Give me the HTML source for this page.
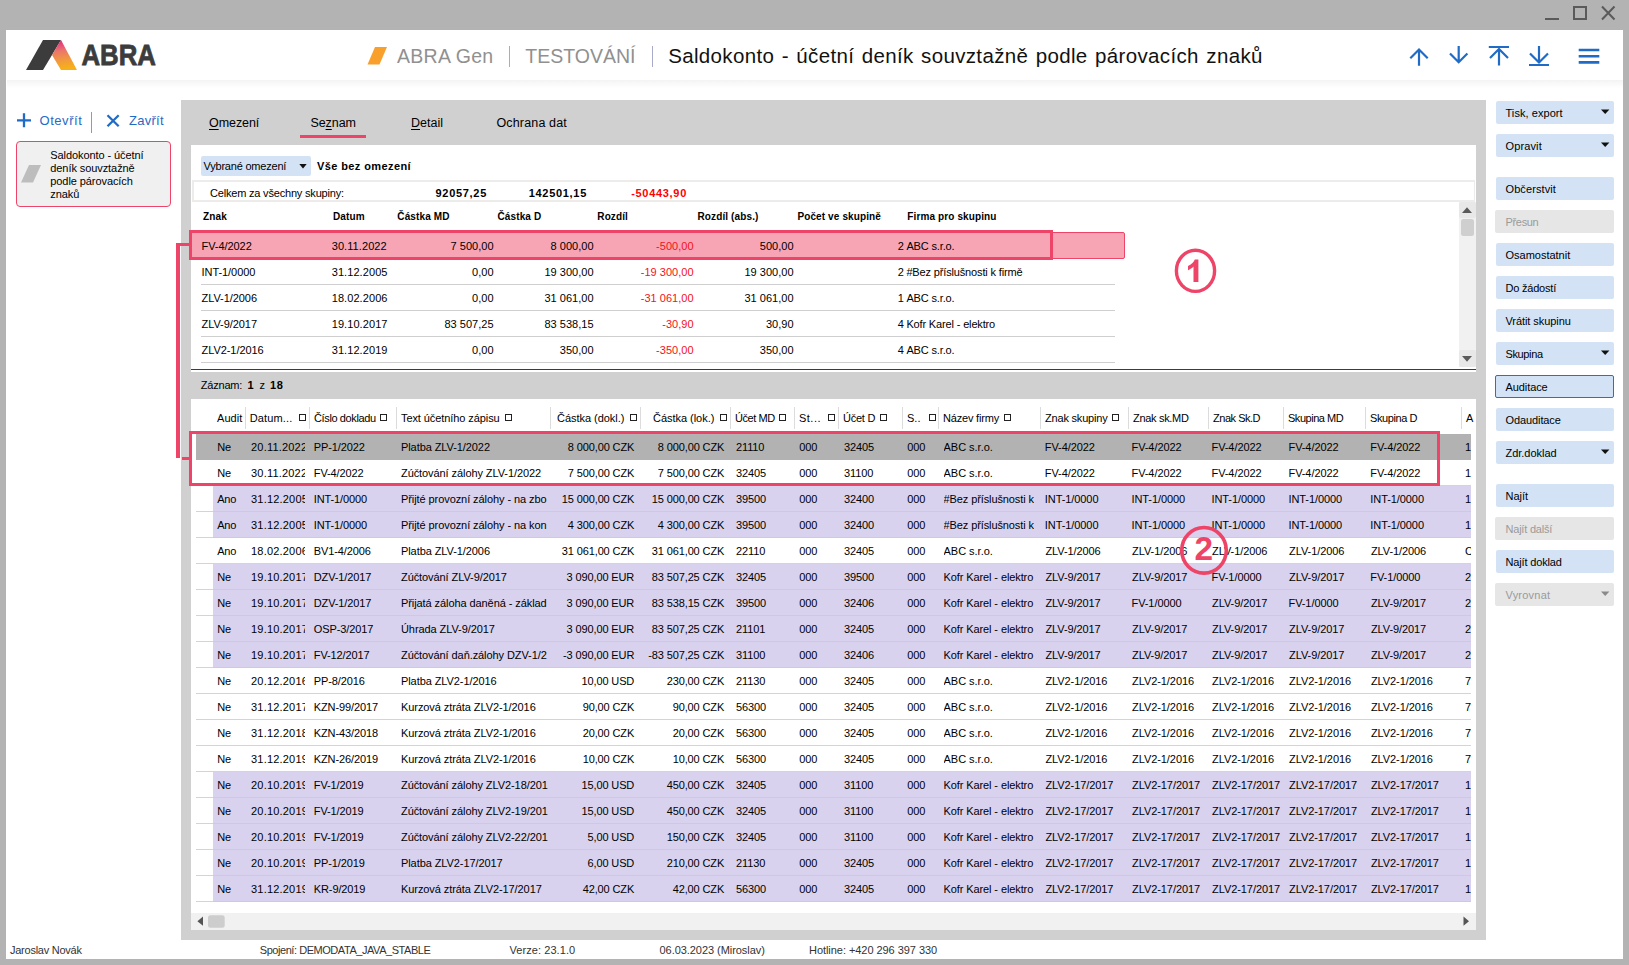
<!DOCTYPE html>
<html><head><meta charset="utf-8"><title>ABRA Gen</title>
<style>
html,body{margin:0;padding:0;}
body{width:1629px;height:965px;overflow:hidden;background:#b3b3b3;position:relative;font-family:"Liberation Sans",sans-serif;}
.r{position:absolute;}
.t{position:absolute;white-space:nowrap;color:#000;}
svg{position:absolute;overflow:visible;}
u{text-decoration-thickness:1px;text-underline-offset:2px;}
</style></head><body>

<div class="r" style="left:6px;top:30px;width:1617px;height:929px;background:#fff;"></div>
<div class="r" style="left:7px;top:80px;width:1616px;height:8px;background:linear-gradient(#f3f3f3,#f7f7f7 30%,#fff);"></div>
<svg style="left:1540px;top:0" width="89" height="30" viewBox="1540 0 89 30">
<rect x="1545" y="18" width="14" height="2" fill="#5a5a5a"/>
<rect x="1574" y="7" width="12" height="12" fill="none" stroke="#5a5a5a" stroke-width="2"/>
<path d="M1602 6.5 L1614.5 19.5 M1614.5 6.5 L1602 19.5" stroke="#5a5a5a" stroke-width="2" fill="none"/>
</svg>
<svg style="left:20px;top:36px" width="150" height="40" viewBox="20 36 150 40">
<defs><linearGradient id="lg" x1="0" y1="0" x2="0.12" y2="1"><stop offset="0" stop-color="#e6007e"/><stop offset="0.14" stop-color="#e73d7c"/><stop offset="0.4" stop-color="#ea776a"/><stop offset="0.72" stop-color="#f19a3c"/><stop offset="1" stop-color="#f7b01a"/></linearGradient></defs>
<polygon points="43,40 61,40 43,70 26,70" fill="#3c3c3c"/>
<polygon points="61,40 77,70 61,70 52,55" fill="url(#lg)"/>
<text x="81.5" y="65.3" font-family="Liberation Sans, sans-serif" font-weight="bold" font-size="29.5" fill="#3c3c3c" stroke="#3c3c3c" stroke-width="0.8" textLength="74.5" lengthAdjust="spacingAndGlyphs">ABRA</text>
</svg>
<svg style="left:366px;top:44px" width="24" height="24" viewBox="366 44 24 24"><polygon points="375,47 387,47 379.5,64.5 367.5,64.5" fill="#f9a02c"/></svg>
<div class="t " style="top:42.64px;font-size:19.5px;line-height:26px;color:#909090;letter-spacing:0.27px;left:397.00px;">ABRA Gen</div>
<div class="r" style="left:509px;top:46px;width:1px;height:21px;background:#a9a9c9;"></div>
<div class="t " style="top:42.64px;font-size:19.5px;line-height:26px;color:#909090;left:525.30px;">TESTOVÁNÍ</div>
<div class="r" style="left:652px;top:46px;width:1px;height:21px;background:#a9a9c9;"></div>
<div class="t title" style="top:41.90px;font-size:20.5px;line-height:28px;color:#111;letter-spacing:0.35px;left:668.20px;word-spacing:1.4px;">Saldokonto - účetní deník souvztažně podle párovacích znaků</div>
<svg style="left:1400px;top:40px" width="210" height="32" viewBox="1400 40 210 32" fill="none" stroke="#1f6bc6" stroke-width="2.2">
<path d="M1419 65.8 V50 M1410.3 58.2 L1419 49.5 L1427.7 58.2"/>
<path d="M1458.7 46 V61.5 M1450 53.5 L1458.7 62.2 L1467.4 53.5"/>
<path d="M1488.8 47 H1509 M1499 65.5 V49.5 M1490 58 L1499 49 L1508 58"/>
<path d="M1539 46 V62 M1530 53.5 L1539 62.5 L1548 53.5 M1529 65 H1549"/>
<path d="M1578.7 50 H1599.3 M1578.7 56.2 H1599.3 M1578.7 62.4 H1599.3" stroke-width="2.6"/>
</svg>
<svg style="left:14px;top:110px" width="110" height="22" viewBox="14 110 110 22" fill="none" stroke="#1f6bc6" stroke-width="2.3">
<path d="M24 113.3 V127.3 M17 120.3 H31"/>
<path d="M107.5 115.2 L118.7 126.2 M118.7 115.2 L107.5 126.2"/>
</svg>
<div class="t " style="top:111.50px;font-size:13px;line-height:18px;color:#1f6bc6;letter-spacing:0.55px;left:39.50px;">Otevřít</div>
<div class="r" style="left:91px;top:112px;width:1px;height:21px;background:#9494c6;"></div>
<div class="t " style="top:111.50px;font-size:13px;line-height:18px;color:#1f6bc6;letter-spacing:0.27px;left:129.00px;">Zavřít</div>
<div class="r" style="left:16px;top:141px;width:155px;height:66px;background:#f0f0f0;box-sizing:border-box;border:1px solid #ee4468;border-radius:4px;"></div>
<svg style="left:20px;top:163px" width="24" height="22" viewBox="20 163 24 22"><polygon points="29,165 41,165 33,182.6 21,182.6" fill="#bdbdbd"/></svg>
<div class="t " style="top:147.89px;font-size:11px;line-height:14px;letter-spacing:-0.08px;left:50.30px;">Saldokonto - účetní</div>
<div class="t " style="top:160.89px;font-size:11px;line-height:14px;letter-spacing:-0.08px;left:50.30px;">deník souvztažně</div>
<div class="t " style="top:173.89px;font-size:11px;line-height:14px;letter-spacing:-0.08px;left:50.30px;">podle párovacích</div>
<div class="t " style="top:186.89px;font-size:11px;line-height:14px;letter-spacing:-0.08px;left:50.30px;">znaků</div>
<div class="r" style="left:181px;top:100px;width:1305px;height:840px;background:#d0d0d0;"></div>
<div class="t " style="top:115.07px;font-size:12.5px;line-height:16px;letter-spacing:-0.07px;left:209.00px;"><u>O</u>mezení</div>
<div class="t " style="top:115.07px;font-size:12.5px;line-height:16px;letter-spacing:-0.05px;left:310.40px;">Se<u>z</u>nam</div>
<div class="t " style="top:115.07px;font-size:12.5px;line-height:16px;left:411.00px;"><u>D</u>etail</div>
<div class="t " style="top:115.07px;font-size:12.5px;line-height:16px;letter-spacing:0.15px;left:496.50px;">Ochrana dat</div>
<div class="r" style="left:300px;top:135px;width:66px;height:3px;background:#ee4468;"></div>
<div class="r" style="left:191px;top:145px;width:1285px;height:227px;background:#fff;"></div>
<div class="r" style="left:191px;top:369px;width:1285px;height:1px;background:#3c3c3c;"></div>
<div class="r" style="left:201px;top:156px;width:110px;height:20px;background:#d3e3f5;border-radius:2px;"></div>
<div class="t " style="top:158.69px;font-size:11px;line-height:14px;letter-spacing:-0.21px;left:203.50px;">Vybrané omezení</div>
<svg style="left:294px;top:160px" width="16" height="12" viewBox="294 160 16 12"><polygon points="299.3,164 306.7,164 303,168.4" fill="#111"/></svg>
<div class="t " style="top:158.69px;font-size:11px;line-height:14px;font-weight:bold;letter-spacing:0.4px;left:317.00px;">Vše bez omezení</div>
<div class="r" style="left:192px;top:180px;width:1283px;height:22px;background:#fff;box-sizing:border-box;border:1px solid #eeebeb;border-width:2px 1px 2px 2px;"></div>
<div class="t " style="top:185.69px;font-size:11px;line-height:14px;letter-spacing:-0.19px;left:210.00px;">Celkem za všechny skupiny:</div>
<div class="t " style="top:185.69px;font-size:11px;line-height:14px;font-weight:bold;letter-spacing:0.7px;right:1142.00px;text-align:right;">92057,25</div>
<div class="t " style="top:185.69px;font-size:11px;line-height:14px;font-weight:bold;letter-spacing:0.7px;right:1042.00px;text-align:right;">142501,15</div>
<div class="t " style="top:185.69px;font-size:11px;line-height:14px;color:#ff0000;font-weight:bold;letter-spacing:0.7px;right:942.00px;text-align:right;">-50443,90</div>
<div class="t " style="top:209.53px;font-size:10px;line-height:14px;font-weight:bold;letter-spacing:0.12px;left:203.00px;">Znak</div>
<div class="t " style="top:209.53px;font-size:10px;line-height:14px;font-weight:bold;letter-spacing:0.12px;left:333.00px;">Datum</div>
<div class="t " style="top:209.53px;font-size:10px;line-height:14px;font-weight:bold;letter-spacing:0.12px;left:397.30px;">Částka MD</div>
<div class="t " style="top:209.53px;font-size:10px;line-height:14px;font-weight:bold;letter-spacing:0.12px;left:497.50px;">Částka D</div>
<div class="t " style="top:209.53px;font-size:10px;line-height:14px;font-weight:bold;letter-spacing:0.12px;left:597.30px;">Rozdíl</div>
<div class="t " style="top:209.53px;font-size:10px;line-height:14px;font-weight:bold;letter-spacing:0.12px;left:697.50px;">Rozdíl (abs.)</div>
<div class="t " style="top:209.53px;font-size:10px;line-height:14px;font-weight:bold;letter-spacing:0.12px;left:797.40px;">Počet ve skupině</div>
<div class="t " style="top:209.53px;font-size:10px;line-height:14px;font-weight:bold;letter-spacing:0.12px;left:907.30px;">Firma pro skupinu</div>
<div class="r" style="left:1050px;top:232px;width:75px;height:27px;background:#f7a5b5;box-sizing:border-box;border:1px solid #ee4468;border-radius:2px;"></div>
<div class="r" style="left:189px;top:230px;width:864px;height:30px;background:#f7a5b5;box-sizing:border-box;border:3px solid #ee4468;"></div>
<div class="t " style="top:239.19px;font-size:11px;line-height:14px;letter-spacing:-0.06px;left:201.50px;">FV-4/2022</div>
<div class="t " style="top:239.19px;font-size:11px;line-height:14px;letter-spacing:0.08px;left:331.70px;">30.11.2022</div>
<div class="t " style="top:239.19px;font-size:11px;line-height:14px;letter-spacing:0.03px;right:1135.40px;text-align:right;">7 500,00</div>
<div class="t " style="top:239.19px;font-size:11px;line-height:14px;letter-spacing:0.03px;right:1035.40px;text-align:right;">8 000,00</div>
<div class="t " style="top:239.19px;font-size:11px;line-height:14px;color:#f5101a;letter-spacing:0.03px;right:935.40px;text-align:right;">-500,00</div>
<div class="t " style="top:239.19px;font-size:11px;line-height:14px;letter-spacing:0.03px;right:835.40px;text-align:right;">500,00</div>
<div class="t " style="top:239.19px;font-size:11px;line-height:14px;right:725.20px;text-align:right;">2</div>
<div class="t " style="top:239.19px;font-size:11px;line-height:14px;letter-spacing:-0.15px;left:906.40px;">ABC s.r.o.</div>
<div class="t " style="top:265.19px;font-size:11px;line-height:14px;letter-spacing:-0.06px;left:201.50px;">INT-1/0000</div>
<div class="t " style="top:265.19px;font-size:11px;line-height:14px;letter-spacing:0.08px;left:331.70px;">31.12.2005</div>
<div class="t " style="top:265.19px;font-size:11px;line-height:14px;letter-spacing:0.03px;right:1135.40px;text-align:right;">0,00</div>
<div class="t " style="top:265.19px;font-size:11px;line-height:14px;letter-spacing:0.03px;right:1035.40px;text-align:right;">19 300,00</div>
<div class="t " style="top:265.19px;font-size:11px;line-height:14px;color:#f5101a;letter-spacing:0.03px;right:935.40px;text-align:right;">-19 300,00</div>
<div class="t " style="top:265.19px;font-size:11px;line-height:14px;letter-spacing:0.03px;right:835.40px;text-align:right;">19 300,00</div>
<div class="t " style="top:265.19px;font-size:11px;line-height:14px;right:725.20px;text-align:right;">2</div>
<div class="t " style="top:265.19px;font-size:11px;line-height:14px;letter-spacing:-0.15px;left:906.40px;">#Bez příslušnosti k firmě</div>
<div class="r" style="left:201px;top:284px;width:914px;height:1px;background:#cfcfcf;"></div>
<div class="t " style="top:291.19px;font-size:11px;line-height:14px;letter-spacing:-0.06px;left:201.50px;">ZLV-1/2006</div>
<div class="t " style="top:291.19px;font-size:11px;line-height:14px;letter-spacing:0.08px;left:331.70px;">18.02.2006</div>
<div class="t " style="top:291.19px;font-size:11px;line-height:14px;letter-spacing:0.03px;right:1135.40px;text-align:right;">0,00</div>
<div class="t " style="top:291.19px;font-size:11px;line-height:14px;letter-spacing:0.03px;right:1035.40px;text-align:right;">31 061,00</div>
<div class="t " style="top:291.19px;font-size:11px;line-height:14px;color:#f5101a;letter-spacing:0.03px;right:935.40px;text-align:right;">-31 061,00</div>
<div class="t " style="top:291.19px;font-size:11px;line-height:14px;letter-spacing:0.03px;right:835.40px;text-align:right;">31 061,00</div>
<div class="t " style="top:291.19px;font-size:11px;line-height:14px;right:725.20px;text-align:right;">1</div>
<div class="t " style="top:291.19px;font-size:11px;line-height:14px;letter-spacing:-0.15px;left:906.40px;">ABC s.r.o.</div>
<div class="r" style="left:201px;top:310px;width:914px;height:1px;background:#cfcfcf;"></div>
<div class="t " style="top:317.19px;font-size:11px;line-height:14px;letter-spacing:-0.06px;left:201.50px;">ZLV-9/2017</div>
<div class="t " style="top:317.19px;font-size:11px;line-height:14px;letter-spacing:0.08px;left:331.70px;">19.10.2017</div>
<div class="t " style="top:317.19px;font-size:11px;line-height:14px;letter-spacing:0.03px;right:1135.40px;text-align:right;">83 507,25</div>
<div class="t " style="top:317.19px;font-size:11px;line-height:14px;letter-spacing:0.03px;right:1035.40px;text-align:right;">83 538,15</div>
<div class="t " style="top:317.19px;font-size:11px;line-height:14px;color:#f5101a;letter-spacing:0.03px;right:935.40px;text-align:right;">-30,90</div>
<div class="t " style="top:317.19px;font-size:11px;line-height:14px;letter-spacing:0.03px;right:835.40px;text-align:right;">30,90</div>
<div class="t " style="top:317.19px;font-size:11px;line-height:14px;right:725.20px;text-align:right;">4</div>
<div class="t " style="top:317.19px;font-size:11px;line-height:14px;letter-spacing:-0.15px;left:906.40px;">Kofr Karel - elektro</div>
<div class="r" style="left:201px;top:336px;width:914px;height:1px;background:#cfcfcf;"></div>
<div class="t " style="top:343.19px;font-size:11px;line-height:14px;letter-spacing:-0.06px;left:201.50px;">ZLV2-1/2016</div>
<div class="t " style="top:343.19px;font-size:11px;line-height:14px;letter-spacing:0.08px;left:331.70px;">31.12.2019</div>
<div class="t " style="top:343.19px;font-size:11px;line-height:14px;letter-spacing:0.03px;right:1135.40px;text-align:right;">0,00</div>
<div class="t " style="top:343.19px;font-size:11px;line-height:14px;letter-spacing:0.03px;right:1035.40px;text-align:right;">350,00</div>
<div class="t " style="top:343.19px;font-size:11px;line-height:14px;color:#f5101a;letter-spacing:0.03px;right:935.40px;text-align:right;">-350,00</div>
<div class="t " style="top:343.19px;font-size:11px;line-height:14px;letter-spacing:0.03px;right:835.40px;text-align:right;">350,00</div>
<div class="t " style="top:343.19px;font-size:11px;line-height:14px;right:725.20px;text-align:right;">4</div>
<div class="t " style="top:343.19px;font-size:11px;line-height:14px;letter-spacing:-0.15px;left:906.40px;">ABC s.r.o.</div>
<div class="r" style="left:201px;top:362px;width:914px;height:1px;background:#cfcfcf;"></div>
<div class="r" style="left:1459px;top:202px;width:17px;height:165px;background:#f1f1f1;"></div>
<div class="r" style="left:1459px;top:202px;width:17px;height:16px;background:#e8e8e8;border-radius:2px;"></div>
<div class="r" style="left:1459px;top:350px;width:17px;height:17px;background:#e8e8e8;border-radius:2px;"></div>
<svg style="left:1459px;top:202px" width="16" height="165" viewBox="1459 202 16 165"><polygon points="1462,213 1472,213 1467,207.3" fill="#5a5a5a"/><rect x="1461" y="219" width="13" height="17" rx="2.5" fill="#cfcfcf"/><polygon points="1462,356 1472,356 1467,361.7" fill="#5a5a5a"/></svg>
<svg style="left:1170px;top:245px" width="52" height="52" viewBox="1170 245 52 52"><ellipse cx="1195.5" cy="270.8" rx="19.1" ry="20.6" fill="#fff" stroke="#ee4468" stroke-width="3.4"/><path d="M1198.4 259.4 V282 H1193.5 V266.6 C1192 268.2 1190.3 269.4 1188 270.3 V265.9 C1191.2 264.6 1193.8 262.3 1194.8 259.4 Z" fill="#ee4468"/></svg>
<div class="t " style="top:378.19px;font-size:11px;line-height:14px;letter-spacing:-0.2px;left:200.80px;">Záznam:</div>
<div class="t " style="top:378.19px;font-size:11px;line-height:14px;font-weight:bold;left:247.50px;">1</div>
<div class="t " style="top:378.19px;font-size:11px;line-height:14px;left:259.50px;">z</div>
<div class="t " style="top:378.19px;font-size:11px;line-height:14px;font-weight:bold;letter-spacing:0.7px;left:270.00px;">18</div>
<div class="r" style="left:191px;top:399px;width:1285px;height:531px;background:#fff;"></div>
<div class="t " style="top:411.19px;font-size:11px;line-height:14px;letter-spacing:0.044px;left:217.00px;">Audit</div>
<div class="t " style="top:411.19px;font-size:11px;line-height:14px;letter-spacing:0.153px;left:249.70px;">Datum...</div>
<div class="r" style="left:299px;top:414px;width:6px;height:6px;box-sizing:border-box;border:1px solid #222;width:7px;height:7px;background:#fff;"></div>
<div class="t " style="top:411.19px;font-size:11px;line-height:14px;letter-spacing:-0.374px;left:314.00px;">Číslo dokladu</div>
<div class="r" style="left:380px;top:414px;width:6px;height:6px;box-sizing:border-box;border:1px solid #222;width:7px;height:7px;background:#fff;"></div>
<div class="t " style="top:411.19px;font-size:11px;line-height:14px;letter-spacing:-0.085px;left:401.00px;">Text účetního zápisu</div>
<div class="r" style="left:504.5px;top:414px;width:6px;height:6px;box-sizing:border-box;border:1px solid #222;width:7px;height:7px;background:#fff;"></div>
<div class="t " style="top:411.19px;font-size:11px;line-height:14px;letter-spacing:-0.033px;left:557.00px;">Částka (dokl.)</div>
<div class="r" style="left:630px;top:414px;width:6px;height:6px;box-sizing:border-box;border:1px solid #222;width:7px;height:7px;background:#fff;"></div>
<div class="t " style="top:411.19px;font-size:11px;line-height:14px;letter-spacing:-0.035px;left:653.00px;">Částka (lok.)</div>
<div class="r" style="left:720px;top:414px;width:6px;height:6px;box-sizing:border-box;border:1px solid #222;width:7px;height:7px;background:#fff;"></div>
<div class="t " style="top:411.19px;font-size:11px;line-height:14px;letter-spacing:-0.426px;left:735.00px;">Účet MD</div>
<div class="r" style="left:779px;top:414px;width:6px;height:6px;box-sizing:border-box;border:1px solid #222;width:7px;height:7px;background:#fff;"></div>
<div class="t " style="top:411.19px;font-size:11px;line-height:14px;letter-spacing:0.487px;left:799.00px;">St...</div>
<div class="r" style="left:828px;top:414px;width:6px;height:6px;box-sizing:border-box;border:1px solid #222;width:7px;height:7px;background:#fff;"></div>
<div class="t " style="top:411.19px;font-size:11px;line-height:14px;letter-spacing:-0.254px;left:843.00px;">Účet D</div>
<div class="r" style="left:879.5px;top:414px;width:6px;height:6px;box-sizing:border-box;border:1px solid #222;width:7px;height:7px;background:#fff;"></div>
<div class="t " style="top:411.19px;font-size:11px;line-height:14px;letter-spacing:0.016px;left:907.00px;">S..</div>
<div class="r" style="left:928.5px;top:414px;width:6px;height:6px;box-sizing:border-box;border:1px solid #222;width:7px;height:7px;background:#fff;"></div>
<div class="t " style="top:411.19px;font-size:11px;line-height:14px;letter-spacing:-0.188px;left:943.00px;">Název firmy</div>
<div class="r" style="left:1004px;top:414px;width:6px;height:6px;box-sizing:border-box;border:1px solid #222;width:7px;height:7px;background:#fff;"></div>
<div class="t " style="top:411.19px;font-size:11px;line-height:14px;letter-spacing:-0.193px;left:1045.00px;">Znak skupiny</div>
<div class="r" style="left:1111.5px;top:414px;width:6px;height:6px;box-sizing:border-box;border:1px solid #222;width:7px;height:7px;background:#fff;"></div>
<div class="t " style="top:411.19px;font-size:11px;line-height:14px;letter-spacing:-0.309px;left:1133.00px;">Znak sk.MD</div>
<div class="t " style="top:411.19px;font-size:11px;line-height:14px;letter-spacing:-0.473px;left:1213.00px;">Znak Sk.D</div>
<div class="t " style="top:411.19px;font-size:11px;line-height:14px;letter-spacing:-0.472px;left:1288.00px;">Skupina MD</div>
<div class="t " style="top:411.19px;font-size:11px;line-height:14px;letter-spacing:-0.407px;left:1370.00px;">Skupina D</div>
<div class="t " style="top:411.19px;font-size:11px;line-height:14px;left:1466.00px;">A</div>
<div class="r" style="left:245px;top:407px;width:1px;height:22px;background:#dcdcdc;"></div>
<div class="r" style="left:309px;top:407px;width:1px;height:22px;background:#dcdcdc;"></div>
<div class="r" style="left:396px;top:407px;width:1px;height:22px;background:#dcdcdc;"></div>
<div class="r" style="left:550px;top:407px;width:1px;height:22px;background:#dcdcdc;"></div>
<div class="r" style="left:640px;top:407px;width:1px;height:22px;background:#dcdcdc;"></div>
<div class="r" style="left:730px;top:407px;width:1px;height:22px;background:#dcdcdc;"></div>
<div class="r" style="left:794px;top:407px;width:1px;height:22px;background:#dcdcdc;"></div>
<div class="r" style="left:838px;top:407px;width:1px;height:22px;background:#dcdcdc;"></div>
<div class="r" style="left:902px;top:407px;width:1px;height:22px;background:#dcdcdc;"></div>
<div class="r" style="left:938px;top:407px;width:1px;height:22px;background:#dcdcdc;"></div>
<div class="r" style="left:1040px;top:407px;width:1px;height:22px;background:#dcdcdc;"></div>
<div class="r" style="left:1128px;top:407px;width:1px;height:22px;background:#dcdcdc;"></div>
<div class="r" style="left:1208px;top:407px;width:1px;height:22px;background:#dcdcdc;"></div>
<div class="r" style="left:1283px;top:407px;width:1px;height:22px;background:#dcdcdc;"></div>
<div class="r" style="left:1365px;top:407px;width:1px;height:22px;background:#dcdcdc;"></div>
<div class="r" style="left:1461px;top:407px;width:1px;height:22px;background:#dcdcdc;"></div>
<div class="r" style="left:196px;top:434px;width:1275px;height:26px;background:#b2b2b2;"></div>
<div class="t " style="top:440.19px;font-size:11px;line-height:14px;letter-spacing:-0.3px;left:217.30px;">Ne</div>
<div class="t " style="top:440.19px;font-size:11px;line-height:14px;letter-spacing:0.2px;left:251.00px;width:53.8px;overflow:hidden;">20.11.2022</div>
<div class="t " style="top:440.19px;font-size:11px;line-height:14px;letter-spacing:-0.12px;left:313.80px;">PP-1/2022</div>
<div class="t " style="top:440.19px;font-size:11px;line-height:14px;letter-spacing:-0.08px;left:401.00px;width:147.5px;overflow:hidden;">Platba ZLV-1/2022</div>
<div class="t " style="top:440.19px;font-size:11px;line-height:14px;letter-spacing:-0.12px;right:994.80px;text-align:right;">8 000,00 CZK</div>
<div class="t " style="top:440.19px;font-size:11px;line-height:14px;letter-spacing:-0.12px;right:904.80px;text-align:right;">8 000,00 CZK</div>
<div class="t " style="top:440.19px;font-size:11px;line-height:14px;letter-spacing:-0.12px;left:736.00px;">21110</div>
<div class="t " style="top:440.19px;font-size:11px;line-height:14px;letter-spacing:-0.12px;left:799.30px;">000</div>
<div class="t " style="top:440.19px;font-size:11px;line-height:14px;letter-spacing:-0.12px;left:844.00px;">32405</div>
<div class="t " style="top:440.19px;font-size:11px;line-height:14px;letter-spacing:-0.12px;left:907.30px;">000</div>
<div class="t " style="top:440.19px;font-size:11px;line-height:14px;letter-spacing:-0.02px;left:943.50px;width:90.5px;overflow:hidden;">ABC s.r.o.</div>
<div class="t " style="top:440.19px;font-size:11px;line-height:14px;letter-spacing:-0.08px;left:1044.80px;">FV-4/2022</div>
<div class="t " style="top:440.19px;font-size:11px;line-height:14px;letter-spacing:-0.08px;left:1131.50px;">FV-4/2022</div>
<div class="t " style="top:440.19px;font-size:11px;line-height:14px;letter-spacing:-0.08px;left:1211.50px;">FV-4/2022</div>
<div class="t " style="top:440.19px;font-size:11px;line-height:14px;letter-spacing:-0.08px;left:1288.50px;">FV-4/2022</div>
<div class="t " style="top:440.19px;font-size:11px;line-height:14px;letter-spacing:-0.08px;left:1370.30px;">FV-4/2022</div>
<div class="t " style="top:440.19px;font-size:11px;line-height:14px;left:1465.00px;width:6px;overflow:hidden;">1</div>
<div class="r" style="left:196px;top:485px;width:1275px;height:1px;background:#d4d4d4;"></div>
<div class="t " style="top:466.19px;font-size:11px;line-height:14px;letter-spacing:-0.3px;left:217.30px;">Ne</div>
<div class="t " style="top:466.19px;font-size:11px;line-height:14px;letter-spacing:0.2px;left:251.00px;width:53.8px;overflow:hidden;">30.11.2022</div>
<div class="t " style="top:466.19px;font-size:11px;line-height:14px;letter-spacing:-0.12px;left:313.80px;">FV-4/2022</div>
<div class="t " style="top:466.19px;font-size:11px;line-height:14px;letter-spacing:-0.08px;left:401.00px;width:147.5px;overflow:hidden;">Zúčtování zálohy ZLV-1/2022</div>
<div class="t " style="top:466.19px;font-size:11px;line-height:14px;letter-spacing:-0.12px;right:994.80px;text-align:right;">7 500,00 CZK</div>
<div class="t " style="top:466.19px;font-size:11px;line-height:14px;letter-spacing:-0.12px;right:904.80px;text-align:right;">7 500,00 CZK</div>
<div class="t " style="top:466.19px;font-size:11px;line-height:14px;letter-spacing:-0.12px;left:736.00px;">32405</div>
<div class="t " style="top:466.19px;font-size:11px;line-height:14px;letter-spacing:-0.12px;left:799.30px;">000</div>
<div class="t " style="top:466.19px;font-size:11px;line-height:14px;letter-spacing:-0.12px;left:844.00px;">31100</div>
<div class="t " style="top:466.19px;font-size:11px;line-height:14px;letter-spacing:-0.12px;left:907.30px;">000</div>
<div class="t " style="top:466.19px;font-size:11px;line-height:14px;letter-spacing:-0.02px;left:943.50px;width:90.5px;overflow:hidden;">ABC s.r.o.</div>
<div class="t " style="top:466.19px;font-size:11px;line-height:14px;letter-spacing:-0.08px;left:1044.80px;">FV-4/2022</div>
<div class="t " style="top:466.19px;font-size:11px;line-height:14px;letter-spacing:-0.08px;left:1131.50px;">FV-4/2022</div>
<div class="t " style="top:466.19px;font-size:11px;line-height:14px;letter-spacing:-0.08px;left:1211.50px;">FV-4/2022</div>
<div class="t " style="top:466.19px;font-size:11px;line-height:14px;letter-spacing:-0.08px;left:1288.50px;">FV-4/2022</div>
<div class="t " style="top:466.19px;font-size:11px;line-height:14px;letter-spacing:-0.08px;left:1370.30px;">FV-4/2022</div>
<div class="t " style="top:466.19px;font-size:11px;line-height:14px;left:1465.00px;width:6px;overflow:hidden;">1</div>
<div class="r" style="left:213px;top:486px;width:1258px;height:26px;background:#d8d2ee;"></div>
<div class="r" style="left:196px;top:511px;width:17px;height:1px;background:#d4d4d4;"></div>
<div class="r" style="left:213px;top:511px;width:1258px;height:1px;background:#cfcad9;"></div>
<div class="t " style="top:492.19px;font-size:11px;line-height:14px;letter-spacing:-0.3px;left:217.30px;">Ano</div>
<div class="t " style="top:492.19px;font-size:11px;line-height:14px;letter-spacing:0.2px;left:251.00px;width:53.8px;overflow:hidden;">31.12.2005</div>
<div class="t " style="top:492.19px;font-size:11px;line-height:14px;letter-spacing:-0.12px;left:313.80px;">INT-1/0000</div>
<div class="t " style="top:492.19px;font-size:11px;line-height:14px;letter-spacing:-0.08px;left:401.00px;width:147.5px;overflow:hidden;">Přijté provozní zálohy - na zbo</div>
<div class="t " style="top:492.19px;font-size:11px;line-height:14px;letter-spacing:-0.12px;right:994.80px;text-align:right;">15 000,00 CZK</div>
<div class="t " style="top:492.19px;font-size:11px;line-height:14px;letter-spacing:-0.12px;right:904.80px;text-align:right;">15 000,00 CZK</div>
<div class="t " style="top:492.19px;font-size:11px;line-height:14px;letter-spacing:-0.12px;left:736.00px;">39500</div>
<div class="t " style="top:492.19px;font-size:11px;line-height:14px;letter-spacing:-0.12px;left:799.30px;">000</div>
<div class="t " style="top:492.19px;font-size:11px;line-height:14px;letter-spacing:-0.12px;left:844.00px;">32400</div>
<div class="t " style="top:492.19px;font-size:11px;line-height:14px;letter-spacing:-0.12px;left:907.30px;">000</div>
<div class="t " style="top:492.19px;font-size:11px;line-height:14px;letter-spacing:-0.1px;left:943.50px;width:90.5px;overflow:hidden;">#Bez příslušnosti k</div>
<div class="t " style="top:492.19px;font-size:11px;line-height:14px;letter-spacing:-0.08px;left:1044.80px;">INT-1/0000</div>
<div class="t " style="top:492.19px;font-size:11px;line-height:14px;letter-spacing:-0.08px;left:1131.50px;">INT-1/0000</div>
<div class="t " style="top:492.19px;font-size:11px;line-height:14px;letter-spacing:-0.08px;left:1211.50px;">INT-1/0000</div>
<div class="t " style="top:492.19px;font-size:11px;line-height:14px;letter-spacing:-0.08px;left:1288.50px;">INT-1/0000</div>
<div class="t " style="top:492.19px;font-size:11px;line-height:14px;letter-spacing:-0.08px;left:1370.30px;">INT-1/0000</div>
<div class="t " style="top:492.19px;font-size:11px;line-height:14px;left:1465.00px;width:6px;overflow:hidden;">1</div>
<div class="r" style="left:213px;top:512px;width:1258px;height:26px;background:#d8d2ee;"></div>
<div class="r" style="left:196px;top:537px;width:17px;height:1px;background:#d4d4d4;"></div>
<div class="r" style="left:213px;top:537px;width:1258px;height:1px;background:#cfcad9;"></div>
<div class="t " style="top:518.19px;font-size:11px;line-height:14px;letter-spacing:-0.3px;left:217.30px;">Ano</div>
<div class="t " style="top:518.19px;font-size:11px;line-height:14px;letter-spacing:0.2px;left:251.00px;width:53.8px;overflow:hidden;">31.12.2005</div>
<div class="t " style="top:518.19px;font-size:11px;line-height:14px;letter-spacing:-0.12px;left:313.80px;">INT-1/0000</div>
<div class="t " style="top:518.19px;font-size:11px;line-height:14px;letter-spacing:-0.08px;left:401.00px;width:147.5px;overflow:hidden;">Přijté provozní zálohy - na kon</div>
<div class="t " style="top:518.19px;font-size:11px;line-height:14px;letter-spacing:-0.12px;right:994.80px;text-align:right;">4 300,00 CZK</div>
<div class="t " style="top:518.19px;font-size:11px;line-height:14px;letter-spacing:-0.12px;right:904.80px;text-align:right;">4 300,00 CZK</div>
<div class="t " style="top:518.19px;font-size:11px;line-height:14px;letter-spacing:-0.12px;left:736.00px;">39500</div>
<div class="t " style="top:518.19px;font-size:11px;line-height:14px;letter-spacing:-0.12px;left:799.30px;">000</div>
<div class="t " style="top:518.19px;font-size:11px;line-height:14px;letter-spacing:-0.12px;left:844.00px;">32400</div>
<div class="t " style="top:518.19px;font-size:11px;line-height:14px;letter-spacing:-0.12px;left:907.30px;">000</div>
<div class="t " style="top:518.19px;font-size:11px;line-height:14px;letter-spacing:-0.1px;left:943.50px;width:90.5px;overflow:hidden;">#Bez příslušnosti k</div>
<div class="t " style="top:518.19px;font-size:11px;line-height:14px;letter-spacing:-0.08px;left:1044.80px;">INT-1/0000</div>
<div class="t " style="top:518.19px;font-size:11px;line-height:14px;letter-spacing:-0.08px;left:1131.50px;">INT-1/0000</div>
<div class="t " style="top:518.19px;font-size:11px;line-height:14px;letter-spacing:-0.08px;left:1211.50px;">INT-1/0000</div>
<div class="t " style="top:518.19px;font-size:11px;line-height:14px;letter-spacing:-0.08px;left:1288.50px;">INT-1/0000</div>
<div class="t " style="top:518.19px;font-size:11px;line-height:14px;letter-spacing:-0.08px;left:1370.30px;">INT-1/0000</div>
<div class="t " style="top:518.19px;font-size:11px;line-height:14px;left:1465.00px;width:6px;overflow:hidden;">1</div>
<div class="r" style="left:196px;top:563px;width:1275px;height:1px;background:#d4d4d4;"></div>
<div class="t " style="top:544.19px;font-size:11px;line-height:14px;letter-spacing:-0.3px;left:217.30px;">Ano</div>
<div class="t " style="top:544.19px;font-size:11px;line-height:14px;letter-spacing:0.2px;left:251.00px;width:53.8px;overflow:hidden;">18.02.2006</div>
<div class="t " style="top:544.19px;font-size:11px;line-height:14px;letter-spacing:-0.12px;left:313.80px;">BV1-4/2006</div>
<div class="t " style="top:544.19px;font-size:11px;line-height:14px;letter-spacing:-0.08px;left:401.00px;width:147.5px;overflow:hidden;">Platba ZLV-1/2006</div>
<div class="t " style="top:544.19px;font-size:11px;line-height:14px;letter-spacing:-0.12px;right:994.80px;text-align:right;">31 061,00 CZK</div>
<div class="t " style="top:544.19px;font-size:11px;line-height:14px;letter-spacing:-0.12px;right:904.80px;text-align:right;">31 061,00 CZK</div>
<div class="t " style="top:544.19px;font-size:11px;line-height:14px;letter-spacing:-0.12px;left:736.00px;">22110</div>
<div class="t " style="top:544.19px;font-size:11px;line-height:14px;letter-spacing:-0.12px;left:799.30px;">000</div>
<div class="t " style="top:544.19px;font-size:11px;line-height:14px;letter-spacing:-0.12px;left:844.00px;">32405</div>
<div class="t " style="top:544.19px;font-size:11px;line-height:14px;letter-spacing:-0.12px;left:907.30px;">000</div>
<div class="t " style="top:544.19px;font-size:11px;line-height:14px;letter-spacing:-0.02px;left:943.50px;width:90.5px;overflow:hidden;">ABC s.r.o.</div>
<div class="t " style="top:544.19px;font-size:11px;line-height:14px;letter-spacing:-0.08px;left:1045.40px;">ZLV-1/2006</div>
<div class="t " style="top:544.19px;font-size:11px;line-height:14px;letter-spacing:-0.08px;left:1132.10px;">ZLV-1/2006</div>
<div class="t " style="top:544.19px;font-size:11px;line-height:14px;letter-spacing:-0.08px;left:1212.10px;">ZLV-1/2006</div>
<div class="t " style="top:544.19px;font-size:11px;line-height:14px;letter-spacing:-0.08px;left:1289.10px;">ZLV-1/2006</div>
<div class="t " style="top:544.19px;font-size:11px;line-height:14px;letter-spacing:-0.08px;left:1370.90px;">ZLV-1/2006</div>
<div class="t " style="top:544.19px;font-size:11px;line-height:14px;left:1465.00px;width:6px;overflow:hidden;">C</div>
<div class="r" style="left:213px;top:564px;width:1258px;height:26px;background:#d8d2ee;"></div>
<div class="r" style="left:196px;top:589px;width:17px;height:1px;background:#d4d4d4;"></div>
<div class="r" style="left:213px;top:589px;width:1258px;height:1px;background:#cfcad9;"></div>
<div class="t " style="top:570.19px;font-size:11px;line-height:14px;letter-spacing:-0.3px;left:217.30px;">Ne</div>
<div class="t " style="top:570.19px;font-size:11px;line-height:14px;letter-spacing:0.2px;left:251.00px;width:53.8px;overflow:hidden;">19.10.2017</div>
<div class="t " style="top:570.19px;font-size:11px;line-height:14px;letter-spacing:-0.12px;left:313.80px;">DZV-1/2017</div>
<div class="t " style="top:570.19px;font-size:11px;line-height:14px;letter-spacing:-0.08px;left:401.00px;width:147.5px;overflow:hidden;">Zúčtování ZLV-9/2017</div>
<div class="t " style="top:570.19px;font-size:11px;line-height:14px;letter-spacing:-0.12px;right:994.80px;text-align:right;">3 090,00 EUR</div>
<div class="t " style="top:570.19px;font-size:11px;line-height:14px;letter-spacing:-0.12px;right:904.80px;text-align:right;">83 507,25 CZK</div>
<div class="t " style="top:570.19px;font-size:11px;line-height:14px;letter-spacing:-0.12px;left:736.00px;">32405</div>
<div class="t " style="top:570.19px;font-size:11px;line-height:14px;letter-spacing:-0.12px;left:799.30px;">000</div>
<div class="t " style="top:570.19px;font-size:11px;line-height:14px;letter-spacing:-0.12px;left:844.00px;">39500</div>
<div class="t " style="top:570.19px;font-size:11px;line-height:14px;letter-spacing:-0.12px;left:907.30px;">000</div>
<div class="t " style="top:570.19px;font-size:11px;line-height:14px;letter-spacing:-0.1px;left:943.50px;width:90.5px;overflow:hidden;">Kofr Karel - elektro</div>
<div class="t " style="top:570.19px;font-size:11px;line-height:14px;letter-spacing:-0.08px;left:1045.40px;">ZLV-9/2017</div>
<div class="t " style="top:570.19px;font-size:11px;line-height:14px;letter-spacing:-0.08px;left:1132.10px;">ZLV-9/2017</div>
<div class="t " style="top:570.19px;font-size:11px;line-height:14px;letter-spacing:-0.08px;left:1211.50px;">FV-1/0000</div>
<div class="t " style="top:570.19px;font-size:11px;line-height:14px;letter-spacing:-0.08px;left:1289.10px;">ZLV-9/2017</div>
<div class="t " style="top:570.19px;font-size:11px;line-height:14px;letter-spacing:-0.08px;left:1370.30px;">FV-1/0000</div>
<div class="t " style="top:570.19px;font-size:11px;line-height:14px;left:1465.00px;width:6px;overflow:hidden;">2</div>
<div class="r" style="left:213px;top:590px;width:1258px;height:26px;background:#d8d2ee;"></div>
<div class="r" style="left:196px;top:615px;width:17px;height:1px;background:#d4d4d4;"></div>
<div class="r" style="left:213px;top:615px;width:1258px;height:1px;background:#cfcad9;"></div>
<div class="t " style="top:596.19px;font-size:11px;line-height:14px;letter-spacing:-0.3px;left:217.30px;">Ne</div>
<div class="t " style="top:596.19px;font-size:11px;line-height:14px;letter-spacing:0.2px;left:251.00px;width:53.8px;overflow:hidden;">19.10.2017</div>
<div class="t " style="top:596.19px;font-size:11px;line-height:14px;letter-spacing:-0.12px;left:313.80px;">DZV-1/2017</div>
<div class="t " style="top:596.19px;font-size:11px;line-height:14px;letter-spacing:-0.08px;left:401.00px;width:147.5px;overflow:hidden;">Přijatá záloha daněná - základ</div>
<div class="t " style="top:596.19px;font-size:11px;line-height:14px;letter-spacing:-0.12px;right:994.80px;text-align:right;">3 090,00 EUR</div>
<div class="t " style="top:596.19px;font-size:11px;line-height:14px;letter-spacing:-0.12px;right:904.80px;text-align:right;">83 538,15 CZK</div>
<div class="t " style="top:596.19px;font-size:11px;line-height:14px;letter-spacing:-0.12px;left:736.00px;">39500</div>
<div class="t " style="top:596.19px;font-size:11px;line-height:14px;letter-spacing:-0.12px;left:799.30px;">000</div>
<div class="t " style="top:596.19px;font-size:11px;line-height:14px;letter-spacing:-0.12px;left:844.00px;">32406</div>
<div class="t " style="top:596.19px;font-size:11px;line-height:14px;letter-spacing:-0.12px;left:907.30px;">000</div>
<div class="t " style="top:596.19px;font-size:11px;line-height:14px;letter-spacing:-0.1px;left:943.50px;width:90.5px;overflow:hidden;">Kofr Karel - elektro</div>
<div class="t " style="top:596.19px;font-size:11px;line-height:14px;letter-spacing:-0.08px;left:1045.40px;">ZLV-9/2017</div>
<div class="t " style="top:596.19px;font-size:11px;line-height:14px;letter-spacing:-0.08px;left:1131.50px;">FV-1/0000</div>
<div class="t " style="top:596.19px;font-size:11px;line-height:14px;letter-spacing:-0.08px;left:1212.10px;">ZLV-9/2017</div>
<div class="t " style="top:596.19px;font-size:11px;line-height:14px;letter-spacing:-0.08px;left:1288.50px;">FV-1/0000</div>
<div class="t " style="top:596.19px;font-size:11px;line-height:14px;letter-spacing:-0.08px;left:1370.90px;">ZLV-9/2017</div>
<div class="t " style="top:596.19px;font-size:11px;line-height:14px;left:1465.00px;width:6px;overflow:hidden;">2</div>
<div class="r" style="left:213px;top:616px;width:1258px;height:26px;background:#d8d2ee;"></div>
<div class="r" style="left:196px;top:641px;width:17px;height:1px;background:#d4d4d4;"></div>
<div class="r" style="left:213px;top:641px;width:1258px;height:1px;background:#cfcad9;"></div>
<div class="t " style="top:622.19px;font-size:11px;line-height:14px;letter-spacing:-0.3px;left:217.30px;">Ne</div>
<div class="t " style="top:622.19px;font-size:11px;line-height:14px;letter-spacing:0.2px;left:251.00px;width:53.8px;overflow:hidden;">19.10.2017</div>
<div class="t " style="top:622.19px;font-size:11px;line-height:14px;letter-spacing:-0.12px;left:313.80px;">OSP-3/2017</div>
<div class="t " style="top:622.19px;font-size:11px;line-height:14px;letter-spacing:-0.08px;left:401.00px;width:147.5px;overflow:hidden;">Úhrada ZLV-9/2017</div>
<div class="t " style="top:622.19px;font-size:11px;line-height:14px;letter-spacing:-0.12px;right:994.80px;text-align:right;">3 090,00 EUR</div>
<div class="t " style="top:622.19px;font-size:11px;line-height:14px;letter-spacing:-0.12px;right:904.80px;text-align:right;">83 507,25 CZK</div>
<div class="t " style="top:622.19px;font-size:11px;line-height:14px;letter-spacing:-0.12px;left:736.00px;">21101</div>
<div class="t " style="top:622.19px;font-size:11px;line-height:14px;letter-spacing:-0.12px;left:799.30px;">000</div>
<div class="t " style="top:622.19px;font-size:11px;line-height:14px;letter-spacing:-0.12px;left:844.00px;">32405</div>
<div class="t " style="top:622.19px;font-size:11px;line-height:14px;letter-spacing:-0.12px;left:907.30px;">000</div>
<div class="t " style="top:622.19px;font-size:11px;line-height:14px;letter-spacing:-0.1px;left:943.50px;width:90.5px;overflow:hidden;">Kofr Karel - elektro</div>
<div class="t " style="top:622.19px;font-size:11px;line-height:14px;letter-spacing:-0.08px;left:1045.40px;">ZLV-9/2017</div>
<div class="t " style="top:622.19px;font-size:11px;line-height:14px;letter-spacing:-0.08px;left:1132.10px;">ZLV-9/2017</div>
<div class="t " style="top:622.19px;font-size:11px;line-height:14px;letter-spacing:-0.08px;left:1212.10px;">ZLV-9/2017</div>
<div class="t " style="top:622.19px;font-size:11px;line-height:14px;letter-spacing:-0.08px;left:1289.10px;">ZLV-9/2017</div>
<div class="t " style="top:622.19px;font-size:11px;line-height:14px;letter-spacing:-0.08px;left:1370.90px;">ZLV-9/2017</div>
<div class="t " style="top:622.19px;font-size:11px;line-height:14px;left:1465.00px;width:6px;overflow:hidden;">2</div>
<div class="r" style="left:213px;top:642px;width:1258px;height:26px;background:#d8d2ee;"></div>
<div class="r" style="left:196px;top:667px;width:17px;height:1px;background:#d4d4d4;"></div>
<div class="r" style="left:213px;top:667px;width:1258px;height:1px;background:#cfcad9;"></div>
<div class="t " style="top:648.19px;font-size:11px;line-height:14px;letter-spacing:-0.3px;left:217.30px;">Ne</div>
<div class="t " style="top:648.19px;font-size:11px;line-height:14px;letter-spacing:0.2px;left:251.00px;width:53.8px;overflow:hidden;">19.10.2017</div>
<div class="t " style="top:648.19px;font-size:11px;line-height:14px;letter-spacing:-0.12px;left:313.80px;">FV-12/2017</div>
<div class="t " style="top:648.19px;font-size:11px;line-height:14px;letter-spacing:-0.08px;left:401.00px;width:147.5px;overflow:hidden;">Zúčtování daň.zálohy DZV-1/2</div>
<div class="t " style="top:648.19px;font-size:11px;line-height:14px;letter-spacing:-0.12px;right:994.80px;text-align:right;">-3 090,00 EUR</div>
<div class="t " style="top:648.19px;font-size:11px;line-height:14px;letter-spacing:-0.12px;right:904.80px;text-align:right;">-83 507,25 CZK</div>
<div class="t " style="top:648.19px;font-size:11px;line-height:14px;letter-spacing:-0.12px;left:736.00px;">31100</div>
<div class="t " style="top:648.19px;font-size:11px;line-height:14px;letter-spacing:-0.12px;left:799.30px;">000</div>
<div class="t " style="top:648.19px;font-size:11px;line-height:14px;letter-spacing:-0.12px;left:844.00px;">32406</div>
<div class="t " style="top:648.19px;font-size:11px;line-height:14px;letter-spacing:-0.12px;left:907.30px;">000</div>
<div class="t " style="top:648.19px;font-size:11px;line-height:14px;letter-spacing:-0.1px;left:943.50px;width:90.5px;overflow:hidden;">Kofr Karel - elektro</div>
<div class="t " style="top:648.19px;font-size:11px;line-height:14px;letter-spacing:-0.08px;left:1045.40px;">ZLV-9/2017</div>
<div class="t " style="top:648.19px;font-size:11px;line-height:14px;letter-spacing:-0.08px;left:1132.10px;">ZLV-9/2017</div>
<div class="t " style="top:648.19px;font-size:11px;line-height:14px;letter-spacing:-0.08px;left:1212.10px;">ZLV-9/2017</div>
<div class="t " style="top:648.19px;font-size:11px;line-height:14px;letter-spacing:-0.08px;left:1289.10px;">ZLV-9/2017</div>
<div class="t " style="top:648.19px;font-size:11px;line-height:14px;letter-spacing:-0.08px;left:1370.90px;">ZLV-9/2017</div>
<div class="t " style="top:648.19px;font-size:11px;line-height:14px;left:1465.00px;width:6px;overflow:hidden;">2</div>
<div class="r" style="left:196px;top:693px;width:1275px;height:1px;background:#d4d4d4;"></div>
<div class="t " style="top:674.19px;font-size:11px;line-height:14px;letter-spacing:-0.3px;left:217.30px;">Ne</div>
<div class="t " style="top:674.19px;font-size:11px;line-height:14px;letter-spacing:0.2px;left:251.00px;width:53.8px;overflow:hidden;">20.12.2016</div>
<div class="t " style="top:674.19px;font-size:11px;line-height:14px;letter-spacing:-0.12px;left:313.80px;">PP-8/2016</div>
<div class="t " style="top:674.19px;font-size:11px;line-height:14px;letter-spacing:-0.08px;left:401.00px;width:147.5px;overflow:hidden;">Platba ZLV2-1/2016</div>
<div class="t " style="top:674.19px;font-size:11px;line-height:14px;letter-spacing:-0.12px;right:994.80px;text-align:right;">10,00 USD</div>
<div class="t " style="top:674.19px;font-size:11px;line-height:14px;letter-spacing:-0.12px;right:904.80px;text-align:right;">230,00 CZK</div>
<div class="t " style="top:674.19px;font-size:11px;line-height:14px;letter-spacing:-0.12px;left:736.00px;">21130</div>
<div class="t " style="top:674.19px;font-size:11px;line-height:14px;letter-spacing:-0.12px;left:799.30px;">000</div>
<div class="t " style="top:674.19px;font-size:11px;line-height:14px;letter-spacing:-0.12px;left:844.00px;">32405</div>
<div class="t " style="top:674.19px;font-size:11px;line-height:14px;letter-spacing:-0.12px;left:907.30px;">000</div>
<div class="t " style="top:674.19px;font-size:11px;line-height:14px;letter-spacing:-0.02px;left:943.50px;width:90.5px;overflow:hidden;">ABC s.r.o.</div>
<div class="t " style="top:674.19px;font-size:11px;line-height:14px;letter-spacing:-0.08px;left:1045.40px;">ZLV2-1/2016</div>
<div class="t " style="top:674.19px;font-size:11px;line-height:14px;letter-spacing:-0.08px;left:1132.10px;">ZLV2-1/2016</div>
<div class="t " style="top:674.19px;font-size:11px;line-height:14px;letter-spacing:-0.08px;left:1212.10px;">ZLV2-1/2016</div>
<div class="t " style="top:674.19px;font-size:11px;line-height:14px;letter-spacing:-0.08px;left:1289.10px;">ZLV2-1/2016</div>
<div class="t " style="top:674.19px;font-size:11px;line-height:14px;letter-spacing:-0.08px;left:1370.90px;">ZLV2-1/2016</div>
<div class="t " style="top:674.19px;font-size:11px;line-height:14px;left:1465.00px;width:6px;overflow:hidden;">7</div>
<div class="r" style="left:196px;top:719px;width:1275px;height:1px;background:#d4d4d4;"></div>
<div class="t " style="top:700.19px;font-size:11px;line-height:14px;letter-spacing:-0.3px;left:217.30px;">Ne</div>
<div class="t " style="top:700.19px;font-size:11px;line-height:14px;letter-spacing:0.2px;left:251.00px;width:53.8px;overflow:hidden;">31.12.2017</div>
<div class="t " style="top:700.19px;font-size:11px;line-height:14px;letter-spacing:-0.12px;left:313.80px;">KZN-99/2017</div>
<div class="t " style="top:700.19px;font-size:11px;line-height:14px;letter-spacing:-0.08px;left:401.00px;width:147.5px;overflow:hidden;">Kurzová ztráta ZLV2-1/2016</div>
<div class="t " style="top:700.19px;font-size:11px;line-height:14px;letter-spacing:-0.12px;right:994.80px;text-align:right;">90,00 CZK</div>
<div class="t " style="top:700.19px;font-size:11px;line-height:14px;letter-spacing:-0.12px;right:904.80px;text-align:right;">90,00 CZK</div>
<div class="t " style="top:700.19px;font-size:11px;line-height:14px;letter-spacing:-0.12px;left:736.00px;">56300</div>
<div class="t " style="top:700.19px;font-size:11px;line-height:14px;letter-spacing:-0.12px;left:799.30px;">000</div>
<div class="t " style="top:700.19px;font-size:11px;line-height:14px;letter-spacing:-0.12px;left:844.00px;">32405</div>
<div class="t " style="top:700.19px;font-size:11px;line-height:14px;letter-spacing:-0.12px;left:907.30px;">000</div>
<div class="t " style="top:700.19px;font-size:11px;line-height:14px;letter-spacing:-0.02px;left:943.50px;width:90.5px;overflow:hidden;">ABC s.r.o.</div>
<div class="t " style="top:700.19px;font-size:11px;line-height:14px;letter-spacing:-0.08px;left:1045.40px;">ZLV2-1/2016</div>
<div class="t " style="top:700.19px;font-size:11px;line-height:14px;letter-spacing:-0.08px;left:1132.10px;">ZLV2-1/2016</div>
<div class="t " style="top:700.19px;font-size:11px;line-height:14px;letter-spacing:-0.08px;left:1212.10px;">ZLV2-1/2016</div>
<div class="t " style="top:700.19px;font-size:11px;line-height:14px;letter-spacing:-0.08px;left:1289.10px;">ZLV2-1/2016</div>
<div class="t " style="top:700.19px;font-size:11px;line-height:14px;letter-spacing:-0.08px;left:1370.90px;">ZLV2-1/2016</div>
<div class="t " style="top:700.19px;font-size:11px;line-height:14px;left:1465.00px;width:6px;overflow:hidden;">7</div>
<div class="r" style="left:196px;top:745px;width:1275px;height:1px;background:#d4d4d4;"></div>
<div class="t " style="top:726.19px;font-size:11px;line-height:14px;letter-spacing:-0.3px;left:217.30px;">Ne</div>
<div class="t " style="top:726.19px;font-size:11px;line-height:14px;letter-spacing:0.2px;left:251.00px;width:53.8px;overflow:hidden;">31.12.2018</div>
<div class="t " style="top:726.19px;font-size:11px;line-height:14px;letter-spacing:-0.12px;left:313.80px;">KZN-43/2018</div>
<div class="t " style="top:726.19px;font-size:11px;line-height:14px;letter-spacing:-0.08px;left:401.00px;width:147.5px;overflow:hidden;">Kurzová ztráta ZLV2-1/2016</div>
<div class="t " style="top:726.19px;font-size:11px;line-height:14px;letter-spacing:-0.12px;right:994.80px;text-align:right;">20,00 CZK</div>
<div class="t " style="top:726.19px;font-size:11px;line-height:14px;letter-spacing:-0.12px;right:904.80px;text-align:right;">20,00 CZK</div>
<div class="t " style="top:726.19px;font-size:11px;line-height:14px;letter-spacing:-0.12px;left:736.00px;">56300</div>
<div class="t " style="top:726.19px;font-size:11px;line-height:14px;letter-spacing:-0.12px;left:799.30px;">000</div>
<div class="t " style="top:726.19px;font-size:11px;line-height:14px;letter-spacing:-0.12px;left:844.00px;">32405</div>
<div class="t " style="top:726.19px;font-size:11px;line-height:14px;letter-spacing:-0.12px;left:907.30px;">000</div>
<div class="t " style="top:726.19px;font-size:11px;line-height:14px;letter-spacing:-0.02px;left:943.50px;width:90.5px;overflow:hidden;">ABC s.r.o.</div>
<div class="t " style="top:726.19px;font-size:11px;line-height:14px;letter-spacing:-0.08px;left:1045.40px;">ZLV2-1/2016</div>
<div class="t " style="top:726.19px;font-size:11px;line-height:14px;letter-spacing:-0.08px;left:1132.10px;">ZLV2-1/2016</div>
<div class="t " style="top:726.19px;font-size:11px;line-height:14px;letter-spacing:-0.08px;left:1212.10px;">ZLV2-1/2016</div>
<div class="t " style="top:726.19px;font-size:11px;line-height:14px;letter-spacing:-0.08px;left:1289.10px;">ZLV2-1/2016</div>
<div class="t " style="top:726.19px;font-size:11px;line-height:14px;letter-spacing:-0.08px;left:1370.90px;">ZLV2-1/2016</div>
<div class="t " style="top:726.19px;font-size:11px;line-height:14px;left:1465.00px;width:6px;overflow:hidden;">7</div>
<div class="r" style="left:196px;top:771px;width:1275px;height:1px;background:#d4d4d4;"></div>
<div class="t " style="top:752.19px;font-size:11px;line-height:14px;letter-spacing:-0.3px;left:217.30px;">Ne</div>
<div class="t " style="top:752.19px;font-size:11px;line-height:14px;letter-spacing:0.2px;left:251.00px;width:53.8px;overflow:hidden;">31.12.2019</div>
<div class="t " style="top:752.19px;font-size:11px;line-height:14px;letter-spacing:-0.12px;left:313.80px;">KZN-26/2019</div>
<div class="t " style="top:752.19px;font-size:11px;line-height:14px;letter-spacing:-0.08px;left:401.00px;width:147.5px;overflow:hidden;">Kurzová ztráta ZLV2-1/2016</div>
<div class="t " style="top:752.19px;font-size:11px;line-height:14px;letter-spacing:-0.12px;right:994.80px;text-align:right;">10,00 CZK</div>
<div class="t " style="top:752.19px;font-size:11px;line-height:14px;letter-spacing:-0.12px;right:904.80px;text-align:right;">10,00 CZK</div>
<div class="t " style="top:752.19px;font-size:11px;line-height:14px;letter-spacing:-0.12px;left:736.00px;">56300</div>
<div class="t " style="top:752.19px;font-size:11px;line-height:14px;letter-spacing:-0.12px;left:799.30px;">000</div>
<div class="t " style="top:752.19px;font-size:11px;line-height:14px;letter-spacing:-0.12px;left:844.00px;">32405</div>
<div class="t " style="top:752.19px;font-size:11px;line-height:14px;letter-spacing:-0.12px;left:907.30px;">000</div>
<div class="t " style="top:752.19px;font-size:11px;line-height:14px;letter-spacing:-0.02px;left:943.50px;width:90.5px;overflow:hidden;">ABC s.r.o.</div>
<div class="t " style="top:752.19px;font-size:11px;line-height:14px;letter-spacing:-0.08px;left:1045.40px;">ZLV2-1/2016</div>
<div class="t " style="top:752.19px;font-size:11px;line-height:14px;letter-spacing:-0.08px;left:1132.10px;">ZLV2-1/2016</div>
<div class="t " style="top:752.19px;font-size:11px;line-height:14px;letter-spacing:-0.08px;left:1212.10px;">ZLV2-1/2016</div>
<div class="t " style="top:752.19px;font-size:11px;line-height:14px;letter-spacing:-0.08px;left:1289.10px;">ZLV2-1/2016</div>
<div class="t " style="top:752.19px;font-size:11px;line-height:14px;letter-spacing:-0.08px;left:1370.90px;">ZLV2-1/2016</div>
<div class="t " style="top:752.19px;font-size:11px;line-height:14px;left:1465.00px;width:6px;overflow:hidden;">7</div>
<div class="r" style="left:213px;top:772px;width:1258px;height:26px;background:#d8d2ee;"></div>
<div class="r" style="left:196px;top:797px;width:17px;height:1px;background:#d4d4d4;"></div>
<div class="r" style="left:213px;top:797px;width:1258px;height:1px;background:#cfcad9;"></div>
<div class="t " style="top:778.19px;font-size:11px;line-height:14px;letter-spacing:-0.3px;left:217.30px;">Ne</div>
<div class="t " style="top:778.19px;font-size:11px;line-height:14px;letter-spacing:0.2px;left:251.00px;width:53.8px;overflow:hidden;">20.10.2019</div>
<div class="t " style="top:778.19px;font-size:11px;line-height:14px;letter-spacing:-0.12px;left:313.80px;">FV-1/2019</div>
<div class="t " style="top:778.19px;font-size:11px;line-height:14px;letter-spacing:-0.08px;left:401.00px;width:147.5px;overflow:hidden;">Zúčtování zálohy ZLV2-18/201</div>
<div class="t " style="top:778.19px;font-size:11px;line-height:14px;letter-spacing:-0.12px;right:994.80px;text-align:right;">15,00 USD</div>
<div class="t " style="top:778.19px;font-size:11px;line-height:14px;letter-spacing:-0.12px;right:904.80px;text-align:right;">450,00 CZK</div>
<div class="t " style="top:778.19px;font-size:11px;line-height:14px;letter-spacing:-0.12px;left:736.00px;">32405</div>
<div class="t " style="top:778.19px;font-size:11px;line-height:14px;letter-spacing:-0.12px;left:799.30px;">000</div>
<div class="t " style="top:778.19px;font-size:11px;line-height:14px;letter-spacing:-0.12px;left:844.00px;">31100</div>
<div class="t " style="top:778.19px;font-size:11px;line-height:14px;letter-spacing:-0.12px;left:907.30px;">000</div>
<div class="t " style="top:778.19px;font-size:11px;line-height:14px;letter-spacing:-0.1px;left:943.50px;width:90.5px;overflow:hidden;">Kofr Karel - elektro</div>
<div class="t " style="top:778.19px;font-size:11px;line-height:14px;letter-spacing:-0.08px;left:1045.40px;">ZLV2-17/2017</div>
<div class="t " style="top:778.19px;font-size:11px;line-height:14px;letter-spacing:-0.08px;left:1132.10px;">ZLV2-17/2017</div>
<div class="t " style="top:778.19px;font-size:11px;line-height:14px;letter-spacing:-0.08px;left:1212.10px;">ZLV2-17/2017</div>
<div class="t " style="top:778.19px;font-size:11px;line-height:14px;letter-spacing:-0.08px;left:1289.10px;">ZLV2-17/2017</div>
<div class="t " style="top:778.19px;font-size:11px;line-height:14px;letter-spacing:-0.08px;left:1370.90px;">ZLV2-17/2017</div>
<div class="t " style="top:778.19px;font-size:11px;line-height:14px;left:1465.00px;width:6px;overflow:hidden;">1</div>
<div class="r" style="left:213px;top:798px;width:1258px;height:26px;background:#d8d2ee;"></div>
<div class="r" style="left:196px;top:823px;width:17px;height:1px;background:#d4d4d4;"></div>
<div class="r" style="left:213px;top:823px;width:1258px;height:1px;background:#cfcad9;"></div>
<div class="t " style="top:804.19px;font-size:11px;line-height:14px;letter-spacing:-0.3px;left:217.30px;">Ne</div>
<div class="t " style="top:804.19px;font-size:11px;line-height:14px;letter-spacing:0.2px;left:251.00px;width:53.8px;overflow:hidden;">20.10.2019</div>
<div class="t " style="top:804.19px;font-size:11px;line-height:14px;letter-spacing:-0.12px;left:313.80px;">FV-1/2019</div>
<div class="t " style="top:804.19px;font-size:11px;line-height:14px;letter-spacing:-0.08px;left:401.00px;width:147.5px;overflow:hidden;">Zúčtování zálohy ZLV2-19/201</div>
<div class="t " style="top:804.19px;font-size:11px;line-height:14px;letter-spacing:-0.12px;right:994.80px;text-align:right;">15,00 USD</div>
<div class="t " style="top:804.19px;font-size:11px;line-height:14px;letter-spacing:-0.12px;right:904.80px;text-align:right;">450,00 CZK</div>
<div class="t " style="top:804.19px;font-size:11px;line-height:14px;letter-spacing:-0.12px;left:736.00px;">32405</div>
<div class="t " style="top:804.19px;font-size:11px;line-height:14px;letter-spacing:-0.12px;left:799.30px;">000</div>
<div class="t " style="top:804.19px;font-size:11px;line-height:14px;letter-spacing:-0.12px;left:844.00px;">31100</div>
<div class="t " style="top:804.19px;font-size:11px;line-height:14px;letter-spacing:-0.12px;left:907.30px;">000</div>
<div class="t " style="top:804.19px;font-size:11px;line-height:14px;letter-spacing:-0.1px;left:943.50px;width:90.5px;overflow:hidden;">Kofr Karel - elektro</div>
<div class="t " style="top:804.19px;font-size:11px;line-height:14px;letter-spacing:-0.08px;left:1045.40px;">ZLV2-17/2017</div>
<div class="t " style="top:804.19px;font-size:11px;line-height:14px;letter-spacing:-0.08px;left:1132.10px;">ZLV2-17/2017</div>
<div class="t " style="top:804.19px;font-size:11px;line-height:14px;letter-spacing:-0.08px;left:1212.10px;">ZLV2-17/2017</div>
<div class="t " style="top:804.19px;font-size:11px;line-height:14px;letter-spacing:-0.08px;left:1289.10px;">ZLV2-17/2017</div>
<div class="t " style="top:804.19px;font-size:11px;line-height:14px;letter-spacing:-0.08px;left:1370.90px;">ZLV2-17/2017</div>
<div class="t " style="top:804.19px;font-size:11px;line-height:14px;left:1465.00px;width:6px;overflow:hidden;">1</div>
<div class="r" style="left:213px;top:824px;width:1258px;height:26px;background:#d8d2ee;"></div>
<div class="r" style="left:196px;top:849px;width:17px;height:1px;background:#d4d4d4;"></div>
<div class="r" style="left:213px;top:849px;width:1258px;height:1px;background:#cfcad9;"></div>
<div class="t " style="top:830.19px;font-size:11px;line-height:14px;letter-spacing:-0.3px;left:217.30px;">Ne</div>
<div class="t " style="top:830.19px;font-size:11px;line-height:14px;letter-spacing:0.2px;left:251.00px;width:53.8px;overflow:hidden;">20.10.2019</div>
<div class="t " style="top:830.19px;font-size:11px;line-height:14px;letter-spacing:-0.12px;left:313.80px;">FV-1/2019</div>
<div class="t " style="top:830.19px;font-size:11px;line-height:14px;letter-spacing:-0.08px;left:401.00px;width:147.5px;overflow:hidden;">Zúčtování zálohy ZLV2-22/201</div>
<div class="t " style="top:830.19px;font-size:11px;line-height:14px;letter-spacing:-0.12px;right:994.80px;text-align:right;">5,00 USD</div>
<div class="t " style="top:830.19px;font-size:11px;line-height:14px;letter-spacing:-0.12px;right:904.80px;text-align:right;">150,00 CZK</div>
<div class="t " style="top:830.19px;font-size:11px;line-height:14px;letter-spacing:-0.12px;left:736.00px;">32405</div>
<div class="t " style="top:830.19px;font-size:11px;line-height:14px;letter-spacing:-0.12px;left:799.30px;">000</div>
<div class="t " style="top:830.19px;font-size:11px;line-height:14px;letter-spacing:-0.12px;left:844.00px;">31100</div>
<div class="t " style="top:830.19px;font-size:11px;line-height:14px;letter-spacing:-0.12px;left:907.30px;">000</div>
<div class="t " style="top:830.19px;font-size:11px;line-height:14px;letter-spacing:-0.1px;left:943.50px;width:90.5px;overflow:hidden;">Kofr Karel - elektro</div>
<div class="t " style="top:830.19px;font-size:11px;line-height:14px;letter-spacing:-0.08px;left:1045.40px;">ZLV2-17/2017</div>
<div class="t " style="top:830.19px;font-size:11px;line-height:14px;letter-spacing:-0.08px;left:1132.10px;">ZLV2-17/2017</div>
<div class="t " style="top:830.19px;font-size:11px;line-height:14px;letter-spacing:-0.08px;left:1212.10px;">ZLV2-17/2017</div>
<div class="t " style="top:830.19px;font-size:11px;line-height:14px;letter-spacing:-0.08px;left:1289.10px;">ZLV2-17/2017</div>
<div class="t " style="top:830.19px;font-size:11px;line-height:14px;letter-spacing:-0.08px;left:1370.90px;">ZLV2-17/2017</div>
<div class="t " style="top:830.19px;font-size:11px;line-height:14px;left:1465.00px;width:6px;overflow:hidden;">1</div>
<div class="r" style="left:213px;top:850px;width:1258px;height:26px;background:#d8d2ee;"></div>
<div class="r" style="left:196px;top:875px;width:17px;height:1px;background:#d4d4d4;"></div>
<div class="r" style="left:213px;top:875px;width:1258px;height:1px;background:#cfcad9;"></div>
<div class="t " style="top:856.19px;font-size:11px;line-height:14px;letter-spacing:-0.3px;left:217.30px;">Ne</div>
<div class="t " style="top:856.19px;font-size:11px;line-height:14px;letter-spacing:0.2px;left:251.00px;width:53.8px;overflow:hidden;">20.10.2019</div>
<div class="t " style="top:856.19px;font-size:11px;line-height:14px;letter-spacing:-0.12px;left:313.80px;">PP-1/2019</div>
<div class="t " style="top:856.19px;font-size:11px;line-height:14px;letter-spacing:-0.08px;left:401.00px;width:147.5px;overflow:hidden;">Platba ZLV2-17/2017</div>
<div class="t " style="top:856.19px;font-size:11px;line-height:14px;letter-spacing:-0.12px;right:994.80px;text-align:right;">6,00 USD</div>
<div class="t " style="top:856.19px;font-size:11px;line-height:14px;letter-spacing:-0.12px;right:904.80px;text-align:right;">210,00 CZK</div>
<div class="t " style="top:856.19px;font-size:11px;line-height:14px;letter-spacing:-0.12px;left:736.00px;">21130</div>
<div class="t " style="top:856.19px;font-size:11px;line-height:14px;letter-spacing:-0.12px;left:799.30px;">000</div>
<div class="t " style="top:856.19px;font-size:11px;line-height:14px;letter-spacing:-0.12px;left:844.00px;">32405</div>
<div class="t " style="top:856.19px;font-size:11px;line-height:14px;letter-spacing:-0.12px;left:907.30px;">000</div>
<div class="t " style="top:856.19px;font-size:11px;line-height:14px;letter-spacing:-0.1px;left:943.50px;width:90.5px;overflow:hidden;">Kofr Karel - elektro</div>
<div class="t " style="top:856.19px;font-size:11px;line-height:14px;letter-spacing:-0.08px;left:1045.40px;">ZLV2-17/2017</div>
<div class="t " style="top:856.19px;font-size:11px;line-height:14px;letter-spacing:-0.08px;left:1132.10px;">ZLV2-17/2017</div>
<div class="t " style="top:856.19px;font-size:11px;line-height:14px;letter-spacing:-0.08px;left:1212.10px;">ZLV2-17/2017</div>
<div class="t " style="top:856.19px;font-size:11px;line-height:14px;letter-spacing:-0.08px;left:1289.10px;">ZLV2-17/2017</div>
<div class="t " style="top:856.19px;font-size:11px;line-height:14px;letter-spacing:-0.08px;left:1370.90px;">ZLV2-17/2017</div>
<div class="t " style="top:856.19px;font-size:11px;line-height:14px;left:1465.00px;width:6px;overflow:hidden;">1</div>
<div class="r" style="left:213px;top:876px;width:1258px;height:26px;background:#d8d2ee;"></div>
<div class="r" style="left:196px;top:901px;width:17px;height:1px;background:#d4d4d4;"></div>
<div class="r" style="left:213px;top:901px;width:1258px;height:1px;background:#cfcad9;"></div>
<div class="t " style="top:882.19px;font-size:11px;line-height:14px;letter-spacing:-0.3px;left:217.30px;">Ne</div>
<div class="t " style="top:882.19px;font-size:11px;line-height:14px;letter-spacing:0.2px;left:251.00px;width:53.8px;overflow:hidden;">31.12.2019</div>
<div class="t " style="top:882.19px;font-size:11px;line-height:14px;letter-spacing:-0.12px;left:313.80px;">KR-9/2019</div>
<div class="t " style="top:882.19px;font-size:11px;line-height:14px;letter-spacing:-0.08px;left:401.00px;width:147.5px;overflow:hidden;">Kurzová ztráta ZLV2-17/2017</div>
<div class="t " style="top:882.19px;font-size:11px;line-height:14px;letter-spacing:-0.12px;right:994.80px;text-align:right;">42,00 CZK</div>
<div class="t " style="top:882.19px;font-size:11px;line-height:14px;letter-spacing:-0.12px;right:904.80px;text-align:right;">42,00 CZK</div>
<div class="t " style="top:882.19px;font-size:11px;line-height:14px;letter-spacing:-0.12px;left:736.00px;">56300</div>
<div class="t " style="top:882.19px;font-size:11px;line-height:14px;letter-spacing:-0.12px;left:799.30px;">000</div>
<div class="t " style="top:882.19px;font-size:11px;line-height:14px;letter-spacing:-0.12px;left:844.00px;">32405</div>
<div class="t " style="top:882.19px;font-size:11px;line-height:14px;letter-spacing:-0.12px;left:907.30px;">000</div>
<div class="t " style="top:882.19px;font-size:11px;line-height:14px;letter-spacing:-0.1px;left:943.50px;width:90.5px;overflow:hidden;">Kofr Karel - elektro</div>
<div class="t " style="top:882.19px;font-size:11px;line-height:14px;letter-spacing:-0.08px;left:1045.40px;">ZLV2-17/2017</div>
<div class="t " style="top:882.19px;font-size:11px;line-height:14px;letter-spacing:-0.08px;left:1132.10px;">ZLV2-17/2017</div>
<div class="t " style="top:882.19px;font-size:11px;line-height:14px;letter-spacing:-0.08px;left:1212.10px;">ZLV2-17/2017</div>
<div class="t " style="top:882.19px;font-size:11px;line-height:14px;letter-spacing:-0.08px;left:1289.10px;">ZLV2-17/2017</div>
<div class="t " style="top:882.19px;font-size:11px;line-height:14px;letter-spacing:-0.08px;left:1370.90px;">ZLV2-17/2017</div>
<div class="t " style="top:882.19px;font-size:11px;line-height:14px;left:1465.00px;width:6px;overflow:hidden;">1</div>
<div class="r" style="left:189px;top:431px;width:1251px;height:55px;box-sizing:border-box;border:3px solid #ee4468;"></div>
<div class="r" style="left:176.3px;top:243px;width:3.3px;height:215px;background:#ee4468;"></div>
<div class="r" style="left:178px;top:243px;width:11px;height:3px;background:#ee4468;"></div>
<div class="r" style="left:181.5px;top:457px;width:8px;height:3px;background:#ee4468;"></div>
<svg style="left:1176px;top:522px" width="56" height="56" viewBox="1176 522 56 56"><ellipse cx="1204" cy="550.3" rx="22.3" ry="22.8" fill="none" stroke="#ee4468" stroke-width="3.6"/><text x="1203.8" y="560.4" text-anchor="middle" font-family="Liberation Sans, sans-serif" font-weight="bold" font-size="33.4" fill="#ee4468">2</text></svg>
<div class="r" style="left:191px;top:913px;width:1285px;height:17px;background:#f1f1f1;"></div>
<svg style="left:191px;top:913px" width="1285" height="17" viewBox="191 913 1285 17"><polygon points="203,916.6 203,925.8 197.4,921.2" fill="#555"/><rect x="208" y="915.3" width="16.7" height="12.4" rx="2.5" fill="#cdcdcd"/><polygon points="1463.5,916.6 1463.5,925.8 1469,921.2" fill="#555"/></svg>
<div class="r" style="left:1496px;top:101px;width:118px;height:23px;background:#d3e3f5;border-radius:2px;"></div>
<div class="t " style="top:106.19px;font-size:11px;line-height:14px;letter-spacing:0.062px;left:1505.50px;">Tisk, export</div>
<svg style="left:1599px;top:108px" width="12" height="8" viewBox="0 0 12 8"><polygon points="2,1.6 10.4,1.6 6.2,6" fill="#111"/></svg>
<div class="r" style="left:1496px;top:134px;width:118px;height:23px;background:#d3e3f5;border-radius:2px;"></div>
<div class="t " style="top:139.19px;font-size:11px;line-height:14px;letter-spacing:0.133px;left:1505.50px;">Opravit</div>
<svg style="left:1599px;top:141px" width="12" height="8" viewBox="0 0 12 8"><polygon points="2,1.6 10.4,1.6 6.2,6" fill="#111"/></svg>
<div class="r" style="left:1496px;top:177px;width:118px;height:23px;background:#d3e3f5;border-radius:2px;"></div>
<div class="t " style="top:182.19px;font-size:11px;line-height:14px;letter-spacing:0.098px;left:1505.50px;">Občerstvit</div>
<div class="r" style="left:1495px;top:210px;width:119px;height:23px;background:#e6e6e6;border-radius:2px;"></div>
<div class="t " style="top:215.19px;font-size:11px;line-height:14px;color:#9a9a9a;letter-spacing:-0.327px;left:1505.50px;">Přesun</div>
<div class="r" style="left:1496px;top:243px;width:118px;height:23px;background:#d3e3f5;border-radius:2px;"></div>
<div class="t " style="top:248.19px;font-size:11px;line-height:14px;letter-spacing:-0.009px;left:1505.50px;">Osamostatnit</div>
<div class="r" style="left:1496px;top:276px;width:118px;height:23px;background:#d3e3f5;border-radius:2px;"></div>
<div class="t " style="top:281.19px;font-size:11px;line-height:14px;letter-spacing:-0.209px;left:1505.50px;">Do žádostí</div>
<div class="r" style="left:1496px;top:309px;width:118px;height:23px;background:#d3e3f5;border-radius:2px;"></div>
<div class="t " style="top:314.19px;font-size:11px;line-height:14px;letter-spacing:-0.068px;left:1505.50px;">Vrátit skupinu</div>
<div class="r" style="left:1496px;top:342px;width:118px;height:23px;background:#d3e3f5;border-radius:2px;"></div>
<div class="t " style="top:347.19px;font-size:11px;line-height:14px;letter-spacing:-0.367px;left:1505.50px;">Skupina</div>
<svg style="left:1599px;top:349px" width="12" height="8" viewBox="0 0 12 8"><polygon points="2,1.6 10.4,1.6 6.2,6" fill="#111"/></svg>
<div class="r" style="left:1496px;top:375px;width:118px;height:23px;background:#d3e3f5;border-radius:2px;box-sizing:border-box;border:1px solid #2a6fc9;margin-left:-1px;width:119px;"></div>
<div class="t " style="top:380.19px;font-size:11px;line-height:14px;letter-spacing:-0.089px;left:1505.50px;">Auditace</div>
<div class="r" style="left:1496px;top:408px;width:118px;height:23px;background:#d3e3f5;border-radius:2px;"></div>
<div class="t " style="top:413.19px;font-size:11px;line-height:14px;letter-spacing:-0.097px;left:1505.50px;">Odauditace</div>
<div class="r" style="left:1496px;top:441px;width:118px;height:23px;background:#d3e3f5;border-radius:2px;"></div>
<div class="t " style="top:446.19px;font-size:11px;line-height:14px;letter-spacing:-0.027px;left:1505.50px;">Zdr.doklad</div>
<svg style="left:1599px;top:448px" width="12" height="8" viewBox="0 0 12 8"><polygon points="2,1.6 10.4,1.6 6.2,6" fill="#111"/></svg>
<div class="r" style="left:1496px;top:484px;width:118px;height:23px;background:#d3e3f5;border-radius:2px;"></div>
<div class="t " style="top:489.19px;font-size:11px;line-height:14px;letter-spacing:-0.025px;left:1505.50px;">Najít</div>
<div class="r" style="left:1495px;top:517px;width:119px;height:23px;background:#e6e6e6;border-radius:2px;"></div>
<div class="t " style="top:522.19px;font-size:11px;line-height:14px;color:#9a9a9a;letter-spacing:-0.211px;left:1505.50px;">Najít další</div>
<div class="r" style="left:1496px;top:550px;width:118px;height:23px;background:#d3e3f5;border-radius:2px;"></div>
<div class="t " style="top:555.19px;font-size:11px;line-height:14px;letter-spacing:-0.158px;left:1505.50px;">Najít doklad</div>
<div class="r" style="left:1495px;top:583px;width:119px;height:23px;background:#e6e6e6;border-radius:2px;"></div>
<div class="t " style="top:588.19px;font-size:11px;line-height:14px;color:#9a9a9a;letter-spacing:0.223px;left:1505.50px;">Vyrovnat</div>
<svg style="left:1599px;top:590px" width="12" height="8" viewBox="0 0 12 8"><polygon points="2,1.6 10.4,1.6 6.2,6" fill="#8a8a8a"/></svg>
<div class="t " style="top:942.79px;font-size:11px;line-height:14px;color:#333;letter-spacing:-0.25px;left:10.00px;">Jaroslav Novák</div>
<div class="t " style="top:942.79px;font-size:11px;line-height:14px;color:#333;letter-spacing:-0.45px;left:259.80px;">Spojení: DEMODATA_JAVA_STABLE</div>
<div class="t " style="top:942.79px;font-size:11px;line-height:14px;color:#333;letter-spacing:0.07px;left:509.50px;">Verze: 23.1.0</div>
<div class="t " style="top:942.79px;font-size:11px;line-height:14px;color:#333;letter-spacing:-0.05px;left:659.50px;">06.03.2023 (Miroslav)</div>
<div class="t " style="top:942.79px;font-size:11px;line-height:14px;color:#333;letter-spacing:-0.05px;left:809.00px;">Hotline: +420 296 397 330</div>
</body></html>
